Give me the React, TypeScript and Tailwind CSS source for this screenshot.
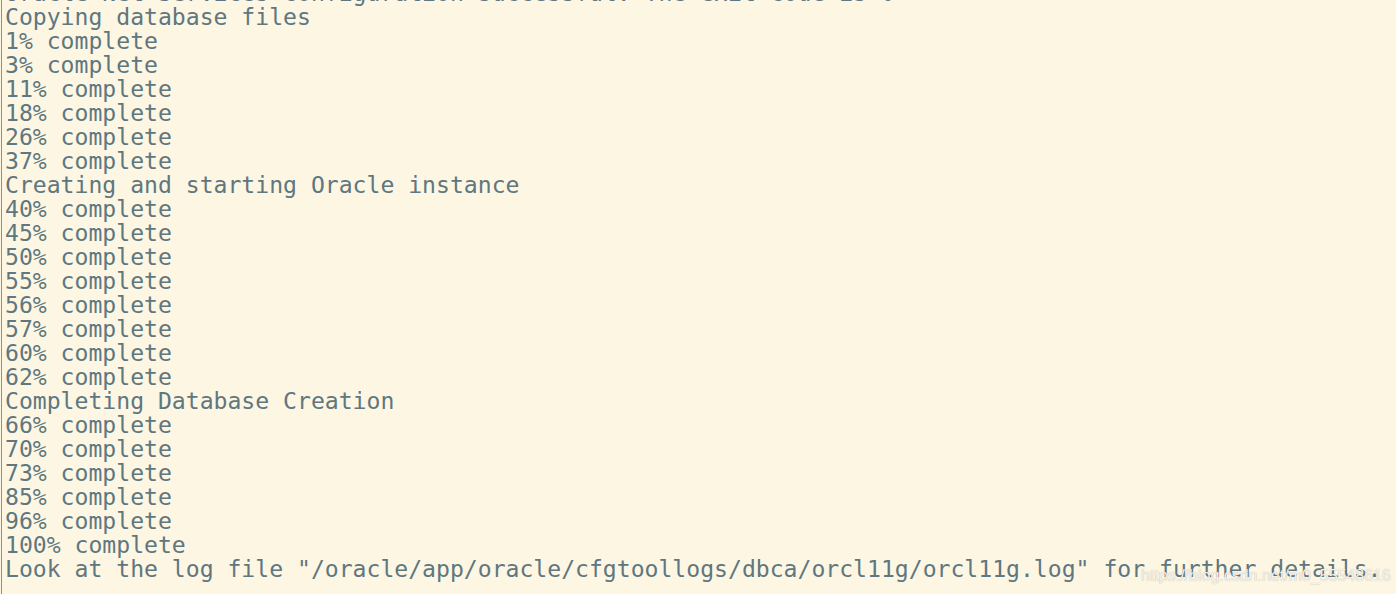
import React from "react";

const lines = [
  "Oracle Net Services configuration successful. The exit code is 0",
  "Copying database files",
  "1% complete",
  "3% complete",
  "11% complete",
  "18% complete",
  "26% complete",
  "37% complete",
  "Creating and starting Oracle instance",
  "40% complete",
  "45% complete",
  "50% complete",
  "55% complete",
  "56% complete",
  "57% complete",
  "60% complete",
  "62% complete",
  "Completing Database Creation",
  "66% complete",
  "70% complete",
  "73% complete",
  "85% complete",
  "96% complete",
  "100% complete",
  'Look at the log file "/oracle/app/oracle/cfgtoollogs/dbca/orcl11g/orcl11g.log" for further details.',
];

export default function App() {
  return (
    <div className="relative w-[1396px] h-[594px] overflow-hidden bg-[#fdf6e3]">
      <div className="ml-[1px] h-full border-l border-[#8f8f8f] pl-[3px] overflow-hidden">
        <div
          className="-mt-[19px] text-[#5e7780] text-[23.1px] leading-[24px] whitespace-pre"
          style={{ fontFamily: '"DejaVu Sans Mono", "Liberation Mono", monospace' }}
        >
          {lines.map((l, i) => (
            <div key={i} className="h-[24px]">
              {l}
            </div>
          ))}
        </div>
      </div>
      <div
        className="absolute left-[1141px] top-[566px] text-[16px] leading-[20px] text-[#f4f1ea] whitespace-nowrap"
        style={{ fontFamily: '"Liberation Sans", Arial, sans-serif', textShadow: "0 0 1px rgba(90,90,90,0.45)" }}
      >
        https://blog.csdn.net/m0_55548616
      </div>
    </div>
  );
}
